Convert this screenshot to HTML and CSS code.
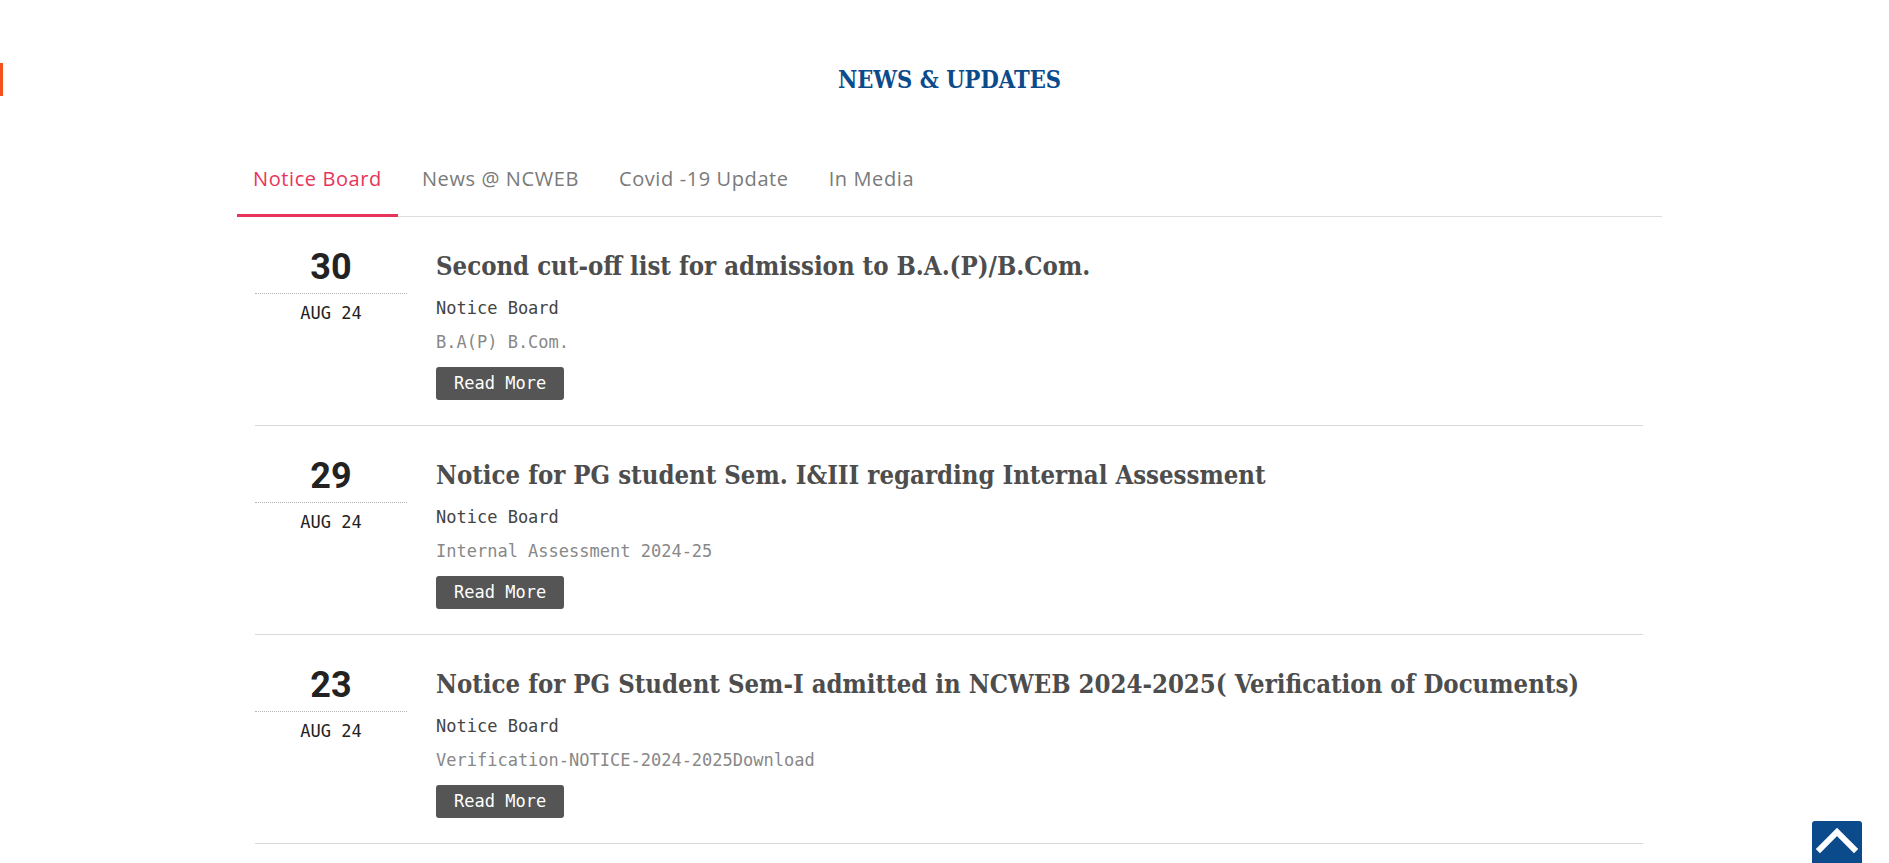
FILE: index.html
```html
<!DOCTYPE html>
<html lang="en">
<head>
    <meta charset="UTF-8">
    <meta name="viewport" content="width=device-width, initial-scale=1.0">
    <title>News &amp; Updates</title>
    <link rel="stylesheet" href="styles.css">
</head>
<body>
    <div class="side-mark"></div>

    <section class="container">
        <h2 class="section-title">NEWS &amp; UPDATES</h2>

        <ul class="tabs">
            <li class="tab active"><a href="#">Notice Board</a></li>
            <li class="tab"><a href="#">News @ NCWEB</a></li>
            <li class="tab"><a href="#">Covid -19 Update</a></li>
            <li class="tab"><a href="#">In Media</a></li>
        </ul>

        <div class="news-list">
            <div class="news-item">
                <div class="news-date">
                    <div class="day">30</div>
                    <div class="month">AUG 24</div>
                </div>
                <div class="news-body">
                    <h3 class="news-title">Second cut-off list for admission to B.A.(P)/B.Com.</h3>
                    <p class="news-cat">Notice Board</p>
                    <p class="news-excerpt">B.A(P) B.Com.</p>
                    <a href="#" class="read-more">Read More</a>
                </div>
            </div>

            <div class="news-item">
                <div class="news-date">
                    <div class="day">29</div>
                    <div class="month">AUG 24</div>
                </div>
                <div class="news-body">
                    <h3 class="news-title">Notice for PG student Sem. I&amp;III regarding Internal Assessment</h3>
                    <p class="news-cat">Notice Board</p>
                    <p class="news-excerpt">Internal Assessment 2024-25</p>
                    <a href="#" class="read-more">Read More</a>
                </div>
            </div>

            <div class="news-item">
                <div class="news-date">
                    <div class="day">23</div>
                    <div class="month">AUG 24</div>
                </div>
                <div class="news-body">
                    <h3 class="news-title">Notice for PG Student Sem-I admitted in NCWEB 2024-2025( Verification of Documents)</h3>
                    <p class="news-cat">Notice Board</p>
                    <p class="news-excerpt">Verification-NOTICE-2024-2025Download</p>
                    <a href="#" class="read-more">Read More</a>
                </div>
            </div>
        </div>
    </section>

    <a href="#" class="back-top" aria-label="Back to top">
        <svg width="50" height="50" viewBox="0 0 50 50">
            <polyline points="8,28 25,11 42,28" fill="none" stroke="#fff" stroke-width="6" stroke-linecap="square"/>
        </svg>
    </a>
</body>
</html>
```

FILE: styles.css
```css
body {
    margin: 0;
    padding: 0 0 0 10px;
    background-color: #ffffff;
    font-family: "DejaVu Sans Mono", monospace;
    color: #444;
}
.side-mark {
    position: absolute;
    left: 0;
    top: 63px;
    width: 3px;
    height: 33px;
    background-color: #f4511e;
}
.container {
    width: 1425px;
    margin: 0 auto;
    padding-top: 65px;
}
.section-title {
    margin: 0 0 55px;
    text-align: center;
    font-family: "DejaVu Serif", serif;
    font-stretch: condensed;
    font-weight: bold;
    font-size: 23.5px;
    line-height: 30px;
    color: #0b4a8b;
}
.tabs {
    display: flex;
    gap: 8px;
    list-style: none;
    margin: 0;
    padding: 0;
    border-bottom: 1px solid #ddd;
}
.tab {
    margin-bottom: -1px;
    border-bottom: 3px solid transparent;
}
.tab a {
    display: block;
    padding: 15px 16px 21px;
    font-family: "Open Sans", sans-serif;
    font-size: 20px;
    letter-spacing: 0.6px;
    line-height: 28px;
    color: #7a7a7a;
    text-decoration: none;
}
.tab.active {
    border-bottom-color: #e8345a;
}
.tab.active a {
    color: #e8345a;
}
.news-list {
    margin: 0 19px 0 18px;
}
.news-item {
    display: flex;
    gap: 29px;
    padding: 32px 0 25px;
    border-bottom: 1px solid #d9d9d9;
}
.news-date {
    width: 152px;
    flex-shrink: 0;
    text-align: center;
    color: #222;
}
.day {
    font-family: Roboto, sans-serif;
    font-weight: bold;
    font-size: 36px;
    line-height: 36px;
    padding-bottom: 8px;
    border-bottom: 1px dotted #b5b5b5;
}
.month {
    margin-top: 7px;
    font-size: 17px;
    line-height: 24px;
}
.news-title {
    margin: 0;
    font-family: "DejaVu Serif", serif;
    font-stretch: condensed;
    font-weight: bold;
    font-size: 25.5px;
    line-height: 34px;
    color: #4d4d4d;
}
.news-cat {
    margin: 13px 0 0;
    font-size: 17px;
    line-height: 24px;
    color: #444;
}
.news-excerpt {
    margin: 10px 0 0;
    font-size: 17px;
    line-height: 24px;
    color: #888;
}
.read-more {
    display: inline-block;
    margin-top: 13px;
    padding: 4px 18px 5px;
    font-size: 17px;
    line-height: 24px;
    color: #fff;
    background-color: #555;
    border-radius: 3px;
    text-decoration: none;
}
.back-top {
    position: fixed;
    right: 27px;
    bottom: -8px;
    width: 50px;
    height: 50px;
    background-color: #0b4a8b;
    border-radius: 3px;
}
.back-top svg {
    display: block;
}
```
